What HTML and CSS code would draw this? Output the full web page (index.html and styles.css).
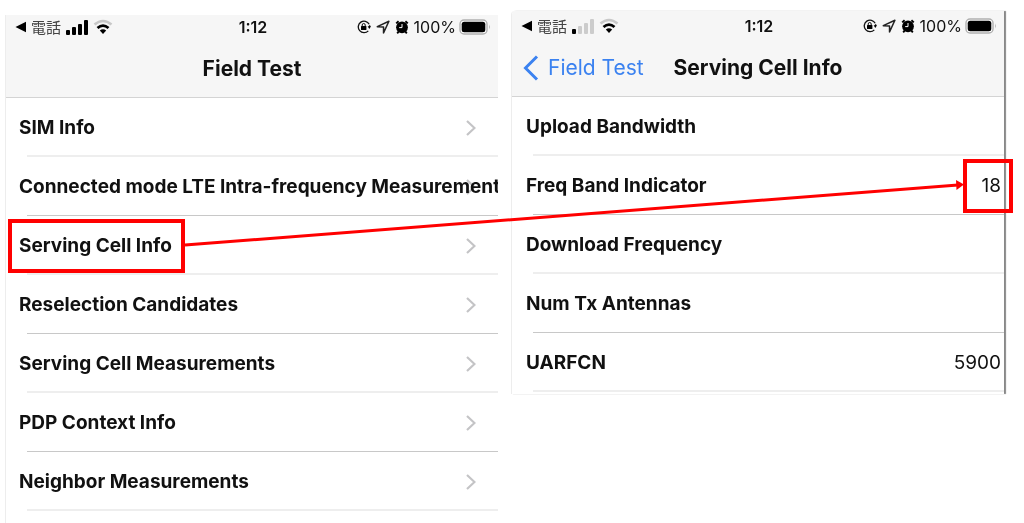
FILE: index.html
```html
<!DOCTYPE html>
<html lang="en">
<head>
<meta charset="utf-8">
<title>Field Test</title>
<link rel="stylesheet" href="styles.css">
</head>
<body>
<svg class="defs" aria-hidden="true">
  <symbol id="back-app" viewBox="0 0 12 12"><path d="M0.500 6L11 0.800V11.200Z"/></symbol>
  <symbol id="wifi" viewBox="0 0 20 16">
    <path d="M1.500 5.500Q10 -1.500 18.500 5.500" fill="none" stroke="#c8c8c8" stroke-width="2.600"/>
    <path d="M4.500 9Q10 4.300 15.500 9" fill="none" stroke="#000" stroke-width="2.800"/>
    <path d="M6.800 11.500Q10 9 13.200 11.500L10 15Z"/>
  </symbol>
  <symbol id="lock" viewBox="0 0 14 14">
    <path d="M12.200 4.200A5.800 5.800 0 1 0 11.300 10.900M12.600 5.200V7" fill="none" stroke="#111" stroke-width="1.300"/>
    <path d="M10.600 6.300H14L12.300 9Z"/>
    <rect x="4" y="6" width="5.400" height="4" rx=".5"/>
    <path d="M5.200 6.400V5a1.500 1.500 0 0 1 3 0v1.400" fill="none" stroke="#111" stroke-width="1"/>
  </symbol>
  <symbol id="location" viewBox="0 0 13 13"><path d="M1.200 6.200L12 1.200L7 12V6.400Z" fill="none" stroke="#222" stroke-width="1.400" stroke-linejoin="round"/></symbol>
  <symbol id="alarm" viewBox="0 0 14 14">
    <circle cx="7" cy="7.300" r="5.900"/>
    <path d="M1.200 3.400L3.600 1.200M12.800 3.400L10.400 1.200M2.200 13.300L3.600 11.600M11.800 13.300L10.400 11.600" stroke="#000" stroke-width="1.900"/>
    <path d="M7 4V7.600H4.200" fill="none" stroke="#fff" stroke-width="1"/>
  </symbol>
  <symbol id="battery" viewBox="0 0 32 16">
    <rect x="1" y="1" width="27" height="14" rx="4" fill="#fff" stroke="#b0b0b0" stroke-width="1.400"/>
    <rect x="2.700" y="2.700" width="23.600" height="10.600" rx="2.500"/>
    <path d="M30 5.500Q31.600 8 30 10.500Z" fill="#aaa"/>
  </symbol>
  <symbol id="chevron" viewBox="0 0 10 16"><path d="M1 1L8.500 8L1 15" fill="none" stroke="#c4c4c6" stroke-width="2.200"/></symbol>
  <symbol id="chevron-back" viewBox="0 0 16 26"><path d="M14 1.500L2.500 13L14 24.500" fill="none" stroke="#3b82f0" stroke-width="3"/></symbol>
</svg>

<main class="stage">
  <section class="phone">
    <header class="header">
      <div class="status">
        <div class="status-left">
          <svg class="back-app"><use href="#back-app"/></svg>
          <span class="carrier" lang="ja">電話</span>
          <svg class="signal" viewBox="0 0 23 15"><rect x="0" y="10" width="4" height="5" rx="1"/><rect x="6" y="7" width="4" height="8" rx="1"/><rect x="12" y="4" width="4" height="11" rx="1"/><rect x="18" y="0" width="4" height="15" rx="1"/></svg>
          <svg class="wifi"><use href="#wifi"/></svg>
        </div>
        <span class="time">1:12</span>
        <div class="status-right">
          <svg class="glyph"><use href="#lock"/></svg>
          <svg class="glyph"><use href="#location"/></svg>
          <svg class="glyph"><use href="#alarm"/></svg>
          <span class="percent">100%</span>
          <svg class="battery"><use href="#battery"/></svg>
        </div>
      </div>
      <div class="nav"><h1 class="title">Field Test</h1></div>
    </header>
    <nav class="list">
      <a class="row" href="#"><span class="label">SIM Info</span><svg class="chevron"><use href="#chevron"/></svg></a>
      <a class="row" href="#"><span class="label">Connected mode LTE Intra-frequency Measurement</span><svg class="chevron"><use href="#chevron"/></svg></a>
      <a class="row" href="#"><span class="label marked">Serving Cell Info</span><svg class="chevron"><use href="#chevron"/></svg></a>
      <a class="row" href="#"><span class="label">Reselection Candidates</span><svg class="chevron"><use href="#chevron"/></svg></a>
      <a class="row" href="#"><span class="label">Serving Cell Measurements</span><svg class="chevron"><use href="#chevron"/></svg></a>
      <a class="row" href="#"><span class="label">PDP Context Info</span><svg class="chevron"><use href="#chevron"/></svg></a>
      <a class="row" href="#"><span class="label">Neighbor Measurements</span><svg class="chevron"><use href="#chevron"/></svg></a>
    </nav>
  </section>

  <section class="phone phone-detail">
    <header class="header">
      <div class="status">
        <div class="status-left">
          <svg class="back-app"><use href="#back-app"/></svg>
          <span class="carrier" lang="ja">電話</span>
          <svg class="signal" viewBox="0 0 23 15"><rect x="0" y="10" width="4" height="5" rx="1"/><g fill="#ccc"><rect x="6" y="7" width="4" height="8" rx="1"/><rect x="12" y="4" width="4" height="11" rx="1"/><rect x="18" y="0" width="4" height="15" rx="1"/></g></svg>
          <svg class="wifi"><use href="#wifi"/></svg>
        </div>
        <span class="time">1:12</span>
        <div class="status-right">
          <svg class="glyph"><use href="#lock"/></svg>
          <svg class="glyph"><use href="#location"/></svg>
          <svg class="glyph"><use href="#alarm"/></svg>
          <span class="percent">100%</span>
          <svg class="battery"><use href="#battery"/></svg>
        </div>
      </div>
      <div class="nav">
        <a class="back" href="#"><svg class="chevron-back"><use href="#chevron-back"/></svg>Field Test</a>
        <h1 class="title">Serving Cell Info</h1>
      </div>
    </header>
    <dl class="list">
      <div class="row"><dt class="label">Upload Bandwidth</dt><dd class="value"></dd></div>
      <div class="row"><dt class="label">Freq Band Indicator</dt><dd class="value marked">18</dd></div>
      <div class="row"><dt class="label">Download Frequency</dt><dd class="value"></dd></div>
      <div class="row"><dt class="label">Num Tx Antennas</dt><dd class="value"></dd></div>
      <div class="row"><dt class="label">UARFCN</dt><dd class="value">5900</dd></div>
    </dl>
  </section>

  <svg class="arrow-line" viewBox="0 0 100 60" preserveAspectRatio="none" aria-hidden="true"><path d="M0 60L100 0"/></svg>
  <svg class="arrow-head" viewBox="0 0 8 10" aria-hidden="true"><path d="M0 0L8 4.500L0.500 10Z"/></svg>
</main>
</body>
</html>
```
FILE: styles.css
```css
* { box-sizing: border-box; }

body {
  margin: 0;
  background: #fff;
  color: #111;
  font-family: Inter, "Noto Sans CJK JP", sans-serif;
  overflow: hidden;
}

.defs { position: absolute; width: 0; height: 0; }

.stage {
  position: relative;
  display: grid;
  grid-template-columns: minmax(0, 1fr) minmax(0, 1fr);
  gap: 13px;
  align-items: start;
  padding: 11px 20px 0 5px;
}

.phone {
  margin-top: 4px;
  padding-bottom: 12px;
  border-left: 1px solid #ededed;
}

.phone-detail {
  margin-top: 0;
  padding-bottom: 2px;
  border-top-left-radius: 4px;
  box-shadow: 2px 0 1px #888;
}

.header {
  background: #f6f6f6;
  border-bottom: 1px solid #d4d4d4;
}

.phone-detail .header { padding-top: 3px; border-top-left-radius: 4px; }

.status {
  display: grid;
  grid-template-columns: 1fr auto 1fr;
  align-items: center;
  height: 24px;
  padding: 0 7px 0 9px;
  font-size: 16px;
  line-height: 24px;
}

.status-left, .status-right { display: flex; align-items: center; }
.status-right { justify-content: flex-end; }
.back-app { width: 12px; height: 12px; margin-right: 4px; }
.carrier { color: #444; font-family: "Noto Sans CJK JP", sans-serif; font-size: 15px; }
.signal { width: 23px; height: 15px; margin: 0 4px 0 5px; }
.wifi { width: 20px; height: 16px; }
.time { font-weight: 600; }
.glyph { width: 14px; height: 14px; margin-right: 5px; }
.percent { margin-right: 3px; }
.battery { width: 32px; height: 16px; }

.nav {
  position: relative;
  display: flex;
  align-items: center;
  justify-content: center;
  height: 58px;
  padding-top: 2px;
}

.title { margin: 0; font-size: 21px; font-weight: 700; line-height: 28px; }

.back {
  position: absolute;
  left: 11px;
  display: flex;
  align-items: center;
  gap: 9px;
  color: #3b82f0;
  font-size: 21px;
  line-height: 28px;
  text-decoration: none;
}

.chevron-back { width: 16px; height: 26px; }

.list { margin: 0; background: #fff; }

.row {
  position: relative;
  display: flex;
  align-items: center;
  height: 59px;
  padding: 0 3px 0 13px;
  overflow: hidden;
  color: #111;
  font-size: 19px;
  line-height: 28px;
  text-decoration: none;
}

.phone-detail .row { padding-left: 14px; overflow: visible; }

.row::after {
  content: "";
  position: absolute;
  left: 21px;
  right: 0;
  bottom: 0;
  height: 1px;
  background: #c8c8c8;
}

.row:nth-child(odd)::after { height: 2px; background: #eee; }

.label { font-weight: 700; white-space: nowrap; }
.value { margin: 0 0 0 auto; }

.chevron {
  position: absolute;
  right: 22px;
  width: 10px;
  height: 16px;
  mix-blend-mode: multiply;
}

.marked { position: relative; }

.marked::before {
  content: "";
  position: absolute;
  inset: -13px -13px -13px -11px;
  border: 4px solid #f00;
}

.value.marked::before { inset: -13px -12px -13px -19px; }

.arrow-line {
  position: absolute;
  top: 185px;
  left: 185px;
  width: calc(100% - 251px);
  height: 60px;
  overflow: visible;
}

.arrow-line path { fill: none; stroke: #f00; stroke-width: 3px; vector-effect: non-scaling-stroke; }

.arrow-head {
  position: absolute;
  top: 180px;
  right: 60px;
  width: 8px;
  height: 10px;
  fill: #f00;
}
```
